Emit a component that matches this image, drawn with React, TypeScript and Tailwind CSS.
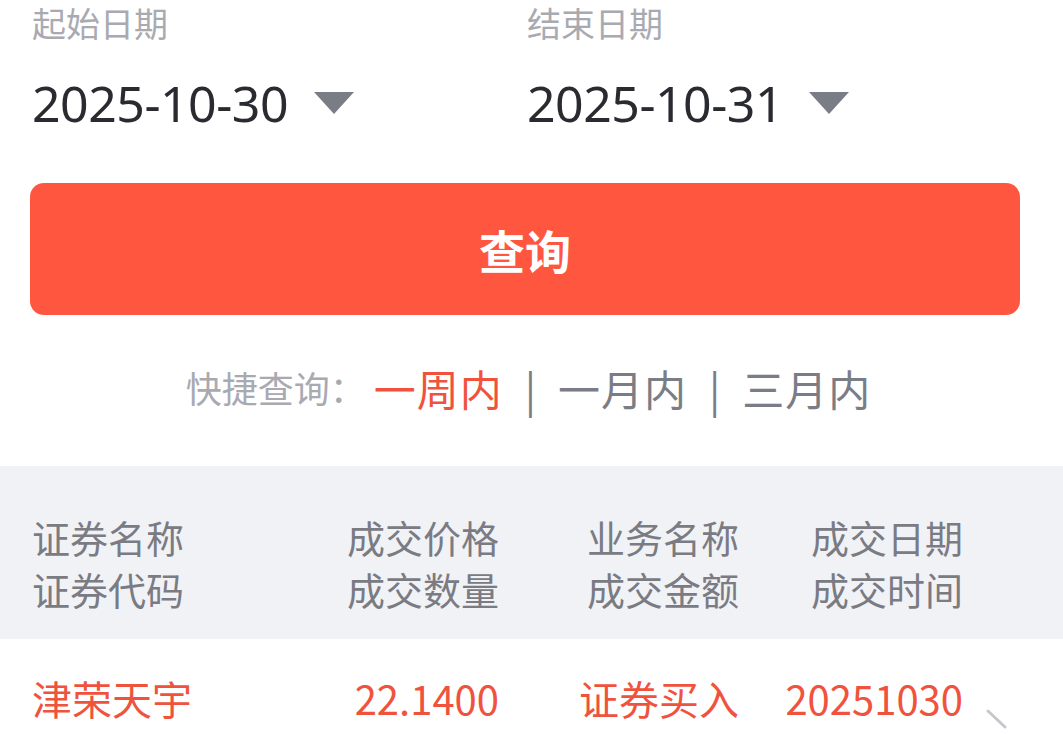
const font = { fontFamily: '"Noto Sans CJK SC", "Noto Sans", sans-serif' };

function Caret() {
  return (
    <svg width="42" height="26" viewBox="0 0 42 26" className="shrink-0">
      <path d="M1 2 H41 L21 24 Z" fill="#7b7d86" />
    </svg>
  );
}

function DateField({ label, value }: { label: string; value: string }) {
  return (
    <div className="flex flex-col">
      <div className="text-[34px] leading-[48px] text-[#a9aab1]">{label}</div>
      <div className="flex items-center gap-[25px] mt-[28px]">
        <span className="text-[50px] leading-[56px] text-[#2a2b31] tracking-[-0.5px]" style={{ fontFamily: '"Noto Sans", sans-serif' }}>
          {value}
        </span>
        <Caret />
      </div>
    </div>
  );
}

export default function App() {
  return (
    <div className="w-[1063px] h-[734px] overflow-hidden bg-white" style={font}>
      <div className="grid grid-cols-[495px_1fr] px-[32px] -mt-[1px]">
        <DateField label="起始日期" value="2025-10-30" />
        <DateField label="结束日期" value="2025-10-31" />
      </div>

      <div className="px-[30px] mt-[52px]">
        <button className="w-[990px] h-[132px] rounded-[14px] bg-[#ff5640] text-white text-[46px] font-bold flex items-center justify-center">
          查询
        </button>
      </div>

      <div className="flex items-center justify-center h-[72px] mt-[36px] pr-[6px]">
        <span className="text-[36px] text-[#a9aab1]">快捷查询：</span>
        <span className="text-[42px] text-[#f0533d] ml-[8px] tracking-[1px]">一周内</span>
        <span className="text-[42px] text-[#7b7d86] mx-[22px]">|</span>
        <span className="text-[42px] text-[#7b7d86] tracking-[1px]">一月内</span>
        <span className="text-[42px] text-[#7b7d86] mx-[22px]">|</span>
        <span className="text-[42px] text-[#7b7d86] tracking-[1px]">三月内</span>
      </div>

      <div className="mt-[43px] h-[173px] bg-[#f1f2f6] flex items-center pl-[32px] pt-[20px] text-[38px] leading-[52px] text-[#7a7b83]">
        <div className="w-[300px]">
          <div>证券名称</div>
          <div>证券代码</div>
        </div>
        <div className="w-[167px] text-right">
          <div>成交价格</div>
          <div>成交数量</div>
        </div>
        <div className="w-[240px] text-right">
          <div>业务名称</div>
          <div>成交金额</div>
        </div>
        <div className="w-[224px] text-right">
          <div>成交日期</div>
          <div>成交时间</div>
        </div>
      </div>

      <div className="flex items-start pl-[32px] pt-[32px] text-[40px] leading-[54px] text-[#f0533d]">
        <div className="w-[300px]">津荣天宇</div>
        <div className="w-[167px] text-right">22.1400</div>
        <div className="w-[240px] text-right">证券买入</div>
        <div className="w-[224px] text-right">20251030</div>
        <svg width="24" height="30" viewBox="0 0 24 30" className="ml-[22px] mt-[38px]">
          <path d="M3 2 L20 18" stroke="#c6c7cc" strokeWidth="3" fill="none" strokeLinecap="round" />
        </svg>
      </div>
    </div>
  );
}
